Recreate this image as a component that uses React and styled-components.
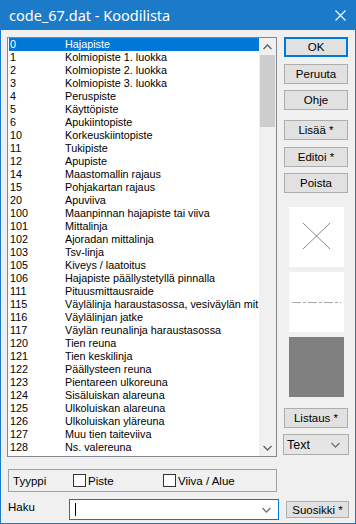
import React from "react";
import styled, { createGlobalStyle } from "styled-components";

const GlobalStyle = createGlobalStyle`
  html, body {
    margin: 0;
    padding: 0;
    background: #f0f0f0;
  }
  body {
    font-family: "Liberation Sans", Arial, sans-serif;
    font-size: 11px;
    color: #000;
  }
`;

const codes = [
  ["0", "Hajapiste"],
  ["1", "Kolmiopiste 1. luokka"],
  ["2", "Kolmiopiste 2. luokka"],
  ["3", "Kolmiopiste 3. luokka"],
  ["4", "Peruspiste"],
  ["5", "Käyttöpiste"],
  ["6", "Apukiintopiste"],
  ["10", "Korkeuskiintopiste"],
  ["11", "Tukipiste"],
  ["12", "Apupiste"],
  ["14", "Maastomallin rajaus"],
  ["15", "Pohjakartan rajaus"],
  ["20", "Apuviiva"],
  ["100", "Maanpinnan hajapiste tai viiva"],
  ["101", "Mittalinja"],
  ["102", "Ajoradan mittalinja"],
  ["103", "Tsv-linja"],
  ["105", "Kiveys / laatoitus"],
  ["106", "Hajapiste päällystetyllä pinnalla"],
  ["111", "Pituusmittausraide"],
  ["115", "Väylälinja haraustasossa, vesiväylän mit"],
  ["116", "Väylälinjan jatke"],
  ["117", "Väylän reunalinja haraustasossa"],
  ["120", "Tien reuna"],
  ["121", "Tien keskilinja"],
  ["122", "Päällysteen reuna"],
  ["123", "Pientareen ulkoreuna"],
  ["124", "Sisäluiskan alareuna"],
  ["125", "Ulkoluiskan alareuna"],
  ["126", "Ulkoluiskan yläreuna"],
  ["127", "Muu tien taiteviiva"],
  ["128", "Ns. valereuna"],
];

const Chevron = ({ up, color = "#606060" }) => (
  <svg width="9" height="6" viewBox="0 0 9 6">
    <polyline
      points={up ? "0.5,5 4.5,1 8.5,5" : "0.5,1 4.5,5 8.5,1"}
      fill="none"
      stroke={color}
      strokeWidth="1.3"
    />
  </svg>
);

const App = () => {
  return (
    <>
      <GlobalStyle />
      <StyledWindow>
        <StyledTitleBar>
          <StyledTitle>code_67.dat - Koodilista</StyledTitle>
          <StyledClose>
            <svg width="11" height="11" viewBox="0 0 11 11">
              <path d="M0.5 0.5 L10.5 10.5 M10.5 0.5 L0.5 10.5" stroke="#fff" strokeWidth="1.1" />
            </svg>
          </StyledClose>
        </StyledTitleBar>

        <StyledBody>
          <StyledMain>
            <StyledList>
              <StyledRows>
                {codes.map(([code, name], i) => (
                  <StyledRow key={code} $selected={i === 0}>
                    <StyledCode>{code}</StyledCode>
                    <StyledName>{name}</StyledName>
                  </StyledRow>
                ))}
              </StyledRows>
              <StyledScrollbar>
                <StyledArrow>
                  <Chevron up />
                </StyledArrow>
                <StyledTrack>
                  <StyledThumb />
                </StyledTrack>
                <StyledArrow>
                  <Chevron />
                </StyledArrow>
              </StyledScrollbar>
            </StyledList>

            <StyledSide>
              <StyledButton $default $top={0}>OK</StyledButton>
              <StyledButton $top={7}>Peruuta</StyledButton>
              <StyledButton $top={6}>Ohje</StyledButton>
              <StyledButton $top={10}>Lisää *</StyledButton>
              <StyledButton $top={7}>Editoi *</StyledButton>
              <StyledButton $top={6}>Poista</StyledButton>

              <StyledPreview $top={14}>
                <svg width="55" height="60" viewBox="0 0 55 60">
                  <path d="M14 16 L41 42 M41 16 L14 42" stroke="#8a8a8a" strokeWidth="1" />
                </svg>
              </StyledPreview>
              <StyledPreview $top={5}>
                <svg width="55" height="60" viewBox="0 0 55 60">
                  <path
                    d="M3 30.5 H52"
                    stroke="#a8a8a8"
                    strokeWidth="1"
                    strokeDasharray="9 2 3 2"
                  />
                </svg>
              </StyledPreview>
              <StyledPreview $top={5} $fill="#808080" />

              <StyledButton $top={11}>Listaus *</StyledButton>
              <StyledSelect $top={6}>
                <span>Text</span>
                <Chevron color="#707070" />
              </StyledSelect>
            </StyledSide>
          </StyledMain>

          <StyledGroup>
            <StyledGroupLabel>Tyyppi</StyledGroupLabel>
            <StyledCheck>
              <StyledBox />
              Piste
            </StyledCheck>
            <StyledCheck $wide>
              <StyledBox />
              Viiva / Alue
            </StyledCheck>
          </StyledGroup>

          <StyledSearchRow>
            <StyledSearchLabel>Haku</StyledSearchLabel>
            <StyledCombo>
              <StyledCaret />
              <Chevron color="#707070" />
            </StyledCombo>
            <StyledButton $top={0} $small>Suosikki *</StyledButton>
          </StyledSearchRow>
        </StyledBody>
      </StyledWindow>
    </>
  );
};

export default App;

const StyledWindow = styled.div`
  width: 356px;
  height: 524px;
  box-sizing: border-box;
  display: flex;
  flex-direction: column;
  background: #f0f0f0;
  border: 1px solid #1b7bc8;
  border-top: none;
`;
const StyledTitleBar = styled.div`
  display: flex;
  align-items: center;
  justify-content: space-between;
  height: 30px;
  margin: 0 -1px;
  padding: 0 10px 0 9px;
  background: #1b7bc8;
  color: #fff;
`;
const StyledTitle = styled.div`
  font-family: "Noto Sans", sans-serif;
  font-size: 14.5px;
  padding-bottom: 1px;
`;
const StyledClose = styled.div`
  display: flex;
  align-items: center;
  width: 11px;
  height: 11px;
`;
const StyledBody = styled.div`
  display: flex;
  flex-direction: column;
  padding: 7px 6px 0 6px;
`;
const StyledMain = styled.div`
  display: flex;
  gap: 0 7px;
`;
const StyledList = styled.div`
  display: flex;
  width: 270px;
  height: 420px;
  box-sizing: border-box;
  border: 1px solid #828790;
  background: #fff;
`;
const StyledRows = styled.div`
  flex: 1;
  min-width: 0;
  overflow: hidden;
  padding-left: 1px;
`;
const StyledRow = styled.div`
  display: grid;
  grid-template-columns: 56px minmax(0, 1fr);
  height: 13px;
  line-height: 13px;
  font-size: 10.8px;
  white-space: nowrap;
  background: ${(p) => (p.$selected ? "#0078d7" : "transparent")};
  color: ${(p) => (p.$selected ? "#fff" : "#000")};
`;
const StyledCode = styled.span`
  padding-left: 1px;
`;
const StyledName = styled.span`
  overflow: hidden;
`;
const StyledScrollbar = styled.div`
  display: flex;
  flex-direction: column;
  flex-shrink: 0;
  width: 17px;
  background: #f0f0f0;
`;
const StyledArrow = styled.div`
  display: flex;
  align-items: center;
  justify-content: center;
  height: 17px;
`;
const StyledTrack = styled.div`
  flex: 1;
  padding: 0 1px;
`;
const StyledThumb = styled.div`
  height: 72px;
  background: #cdcdcd;
`;
const StyledSide = styled.div`
  display: flex;
  flex-direction: column;
  width: 64px;
`;
const StyledButton = styled.div`
  display: flex;
  align-items: center;
  justify-content: center;
  box-sizing: border-box;
  width: ${(p) => (p.$small ? "63px" : "64px")};
  height: ${(p) => (p.$small ? "17px" : "20px")};
  margin-top: ${(p) => p.$top}px;
  background: #e1e1e1;
  border: ${(p) => (p.$default ? "2px solid #0078d7" : "1px solid #adadad")};
  font-size: 11.5px;
  white-space: nowrap;
`;
const StyledPreview = styled.div`
  width: 55px;
  height: 60px;
  margin: ${(p) => p.$top}px auto 0;
  background: ${(p) => p.$fill || "#fff"};
`;
const StyledSelect = styled.div`
  display: flex;
  align-items: center;
  justify-content: space-between;
  box-sizing: border-box;
  width: 66px;
  height: 21px;
  margin: ${(p) => p.$top}px 0 0 -1px;
  padding: 0 8px 0 3px;
  background: #e5e5e5;
  border: 1px solid #adadad;
  font-size: 12.5px;
`;
const StyledGroup = styled.div`
  display: flex;
  align-items: center;
  box-sizing: border-box;
  width: 269px;
  height: 23px;
  margin: 12px 0 0 1px;
  padding: 0 0 0 4px;
  border: 1px solid #a0a0a0;
  font-size: 11.5px;
`;
const StyledGroupLabel = styled.span`
  width: 60px;
`;
const StyledCheck = styled.label`
  display: flex;
  align-items: center;
  gap: 0 2px;
  width: ${(p) => (p.$wide ? "auto" : "90px")};
`;
const StyledBox = styled.span`
  width: 13px;
  height: 13px;
  box-sizing: border-box;
  border: 1px solid #333;
  background: #fff;
`;
const StyledSearchRow = styled.div`
  display: flex;
  align-items: center;
  margin-top: 7px;
  font-size: 11.5px;
`;
const StyledSearchLabel = styled.span`
  width: 61px;
  padding-left: 1px;
  margin-top: -6px;
`;
const StyledCombo = styled.div`
  display: flex;
  align-items: center;
  justify-content: space-between;
  box-sizing: border-box;
  width: 210px;
  height: 21px;
  padding: 0 7px 0 5px;
  margin-right: 7px;
  background: #fff;
  border: 1px solid #0078d7;
`;
const StyledCaret = styled.span`
  width: 1px;
  height: 13px;
  background: #000;
`;
